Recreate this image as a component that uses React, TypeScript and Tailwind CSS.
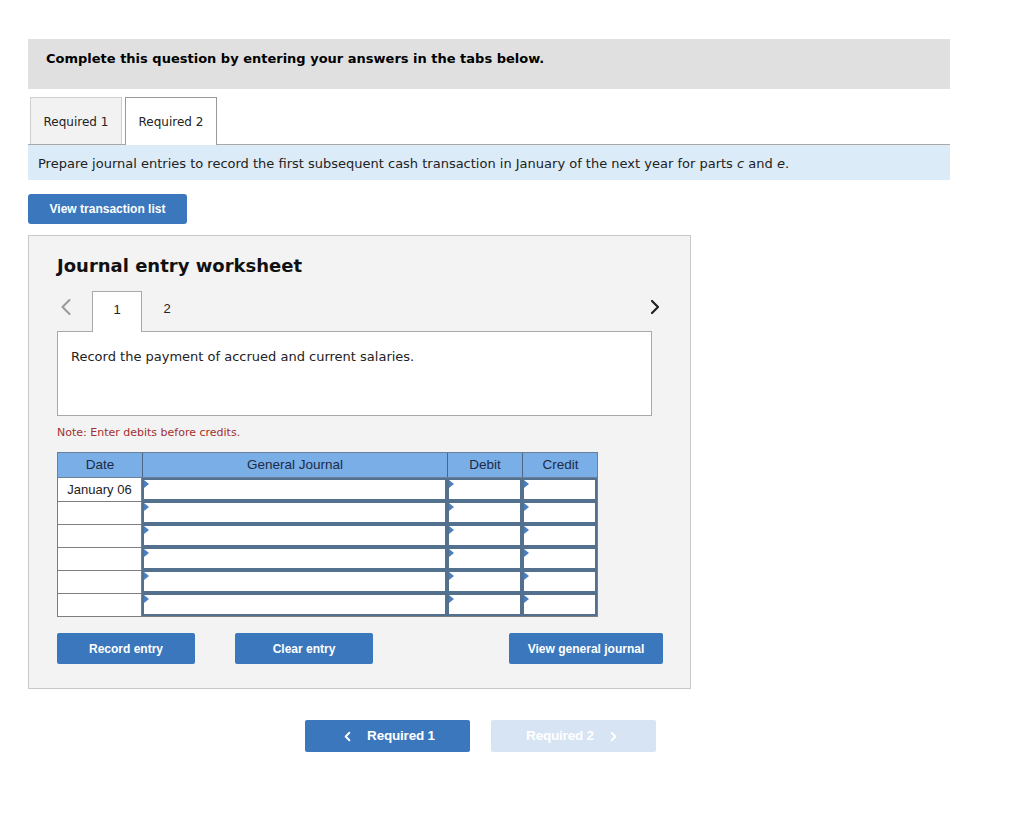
import { ChevronLeft, ChevronRight } from 'lucide-react';

const verdana = { fontFamily: '"DejaVu Sans", Verdana, sans-serif' };
const arial = { fontFamily: '"Liberation Sans", Arial, sans-serif' };

const Marker = () => (
  <span className="absolute left-0 top-0 h-0 w-0 border-y-[4px] border-l-[5px] border-y-transparent border-l-[#4a7fc0]" />
);

const InputCell = () => (
  <div className="relative h-[23px] border-2 border-[#53708f] bg-white">
    <Marker />
  </div>
);

const App = () => {
  const rows = ['January 06', '', '', '', '', ''];

  return (
    <div className="min-h-screen bg-white pl-[28px] pt-[39px] text-[#222]" style={verdana}>
      <div className="w-[922px]">
        {/* question header */}
        <div className="h-[50px] bg-[#e0e0e0] pl-[18px] pt-[12px] text-[13px] font-bold leading-[16px] text-black">
          Complete this question by entering your answers in the tabs below.
        </div>

        {/* tabs */}
        <div className="mt-[8px] flex h-[47px] gap-[3px] pl-[2px] text-[12px]">
          <div className="flex w-[92px] items-center justify-center border border-b-0 border-[#cfcfcf] bg-[#f2f2f2] pt-[1px]">
            Required 1
          </div>
          <div className="relative z-10 flex h-[48px] w-[92px] items-center justify-center border border-b-0 border-[#999] bg-white">
            Required 2
          </div>
        </div>

        <div className="flex h-[36px] items-center border-t border-[#a8a8a8] bg-[#dcebf8] pl-[10px] pt-[2px] text-[13px]">
          Prepare journal entries to record the first subsequent cash transaction in January of the next year for parts&nbsp;<i>c</i>&nbsp;and&nbsp;<i>e</i>.
        </div>

        <button
          className="mt-[14px] flex h-[30px] w-[159px] items-center justify-center rounded-[3px] bg-[#3b77bc] text-[12px] font-bold text-white"
          style={arial}
        >
          View transaction list
        </button>

        {/* worksheet */}
        <div className="mt-[11px] h-[454px] w-[663px] border border-[#c8c8c8] bg-[#f3f3f3] pl-[28px] pt-[19px]">
          <h2 className="text-[18px] font-bold leading-[22px] text-[#111]">Journal entry worksheet</h2>

          <div className="mt-[14px] flex h-[40px] w-[595px] items-end">
            <div className="flex h-full w-[35px] items-center justify-start pb-[9px]">
              <ChevronLeft className="-ml-[5px] h-[28px] w-[28px] text-[#9a9a9a]" strokeWidth={1.8} />
            </div>
            <div
              className="relative z-10 -mb-px flex h-[41px] w-[50px] items-center justify-center border border-b-0 border-[#a8a8a8] bg-white pb-[4px] text-[13px]"
              style={arial}
            >
              1
            </div>
            <div className="flex h-full w-[50px] items-center justify-center pb-[4px] text-[13px]" style={arial}>
              2
            </div>
            <div className="flex-1" />
            <div className="flex h-full w-[30px] items-center justify-end pb-[9px]">
              <ChevronRight className="-mr-[15px] h-[24px] w-[24px] text-[#222]" strokeWidth={2.2} />
            </div>
          </div>

          <div className="h-[85px] w-[595px] border border-[#a8a8a8] bg-white pl-[13px] pt-[15px] text-[13px]">
            Record the payment of accrued and current salaries.
          </div>

          <div className="mt-[10px] text-[11px] leading-[14px] text-[#a3302f]">Note: Enter debits before credits.</div>

          {/* journal table */}
          <div className="mt-[12px] w-[541px]" style={arial}>
            <div className="grid grid-cols-[85px_305px_75px_75px] border border-[#6a7f99] bg-[#7aaee7] text-[13.5px] text-[#1b2b48]">
              <div className="flex h-[24px] items-center justify-center border-r border-[#4d6686] pt-[1px]">Date</div>
              <div className="flex items-center justify-center border-r border-[#4d6686] pt-[1px]">General Journal</div>
              <div className="flex items-center justify-center border-r border-[#4d6686] pt-[1px]">Debit</div>
              <div className="flex items-center justify-center pt-[1px]">Credit</div>
            </div>
            <div className="border-x border-b border-[#7d7d7d]">
              {rows.map((d, i) => (
                <div key={i} className="grid grid-cols-[84px_305px_75px_75px]">
                  <div
                    className={`flex h-[23px] items-center justify-center border-r border-[#7d7d7d] bg-white text-[13px] text-[#222] ${
                      i > 0 ? 'border-t' : ''
                    }`}
                  >
                    {d}
                  </div>
                  <InputCell />
                  <InputCell />
                  <InputCell />
                </div>
              ))}
            </div>
          </div>

          <div className="mt-[16px] flex w-[606px]" style={arial}>
            <button className="flex h-[31px] w-[138px] items-center justify-center rounded-[2px] bg-[#3b77bc] text-[12px] font-bold text-white">
              Record entry
            </button>
            <button className="ml-[40px] flex h-[31px] w-[138px] items-center justify-center rounded-[2px] bg-[#3b77bc] text-[12px] font-bold text-white">
              Clear entry
            </button>
            <div className="flex-1" />
            <button className="flex h-[31px] w-[154px] items-center justify-center rounded-[2px] bg-[#3b77bc] text-[12px] font-bold text-white">
              View general journal
            </button>
          </div>
        </div>

        {/* bottom nav */}
        <div className="mt-[31px] flex gap-[21px] pl-[277px]" style={arial}>
          <button className="flex h-[32px] w-[165px] items-center justify-center gap-[12px] rounded-[2px] bg-[#3b77bc] text-[13.5px] font-bold tracking-[-0.2px] text-white">
            <ChevronLeft className="h-[15px] w-[15px]" strokeWidth={3} />
            Required 1
          </button>
          <button className="flex h-[32px] w-[165px] items-center justify-center gap-[12px] rounded-[2px] bg-[#d6e4f3] text-[13.5px] font-bold tracking-[-0.2px] text-white">
            Required 2
            <ChevronRight className="h-[15px] w-[15px]" strokeWidth={3} />
          </button>
        </div>
      </div>
    </div>
  );
};

export default App;
